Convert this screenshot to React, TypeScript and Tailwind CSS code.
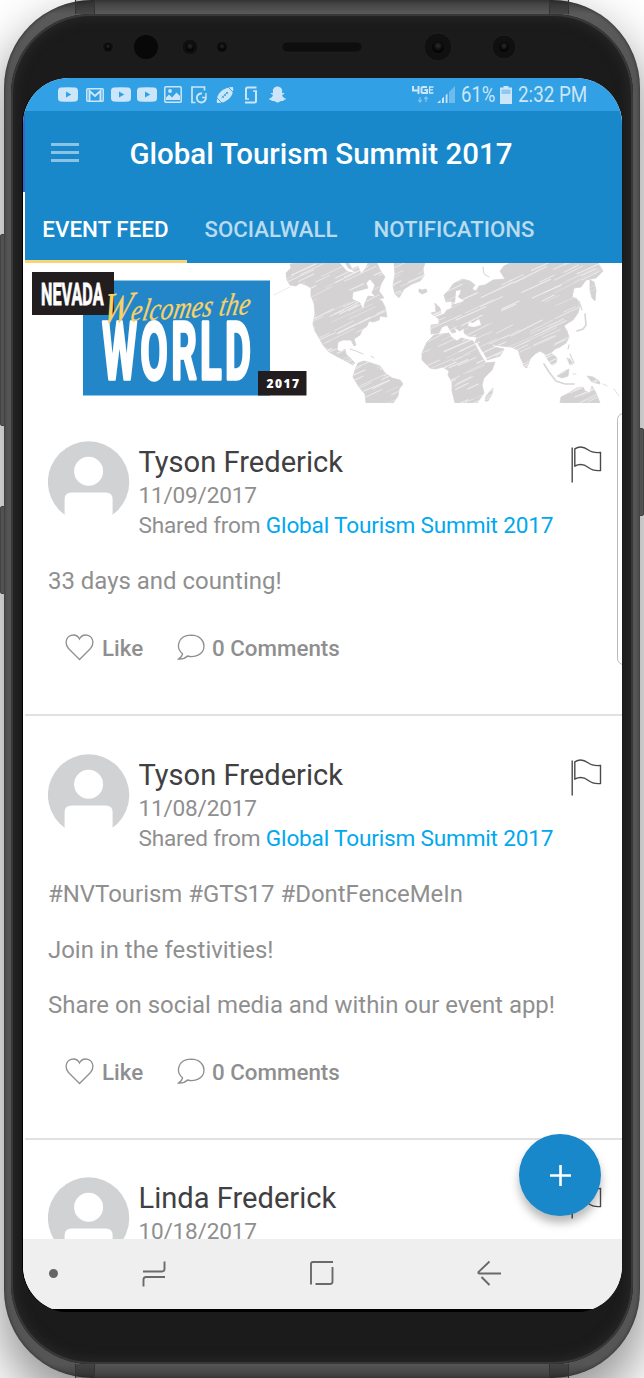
import React from "react";
import { FaSnapchatGhost } from "react-icons/fa";

const LAND = [
  "M287 280 L286 273 L291 268 L290 264 L298 263 L349 263 L352 269 L358 266 L361 274 L366 268 L368 263 L377 263 L380 270 L385 277 L381 284 L379 291 L384 298 L378 299 L372 293 L375 285 L370 279 L366 283 L368 288 L361 290 L353 292 L352 299 L360 303 L363 310 L365 303 L368 296 L375 297 L382 301 L385 307 L387 317 L380 316 L379 320 L373 322 L369 321 L367 326 L362 330 L360 335 L354 339 L356 345 L354 346 L351 340 L343 340 L338 342 L337 350 L341 352 L345 349 L346 354 L350 358 L355 363 L353 365 L346 361 L338 357 L329 352 L323 345 L318 336 L315 331 L313 324 L315 313 L314 303 L311 296 L311 288 L306 285 L300 283 L296 286 L290 285 Z",
  "M358 363 L364 361 L371 363 L380 366 L385 373 L392 378 L400 380 L403 384 L399 389 L398 396 L393 403 L366 403 L365 394 L359 387 L353 377 L355 370 Z",
  "M394 263 L425 263 L423 269 L424 276 L420 281 L412 284 L404 289 L399 298 L395 294 L393 286 L395 274 Z",
  "M419 289 L422 290 L426 289 L427 292 L422 294 L419 292 Z",
  "M431 325 L439 324 L439 319 L436 317 L444 314 L447 310 L452 308 L452 301 L446 302 L444 295 L449 290 L453 284 L462 279 L470 281 L475 285 L472 289 L476 291 L479 286 L485 285 L493 280 L505 279 L500 271 L504 266 L510 263 L598 263 L603 271 L596 278 L586 280 L581 287 L574 288 L572 297 L577 299 L580 306 L578 313 L573 320 L568 323 L564 326 L567 331 L569 337 L566 343 L560 347 L555 349 L551 353 L557 358 L556 363 L552 365 L548 360 L545 354 L540 351 L535 354 L530 359 L528 365 L525 367 L521 359 L518 350 L511 347 L501 346 L494 345 L490 341 L494 347 L504 349 L500 356 L487 360 L480 351 L475 343 L477 337 L468 336 L464 333 L464 328 L460 331 L455 328 L451 322 L456 332 L452 333 L447 325 L442 327 L439 333 L431 334 Z",
  "M434 335 L442 334 L449 333 L451 337 L457 341 L461 338 L473 341 L480 354 L486 363 L495 362 L492 370 L484 378 L482 385 L484 393 L477 403 L455 403 L452 391 L452 382 L448 375 L449 371 L443 367 L435 369 L430 368 L422 360 L422 353 L427 342 Z",
  "M486 396 L493 388 L492 394 L488 401 L485 401 Z",
  "M560 403 L561 397 L569 393 L577 388 L583 387 L585 391 L590 393 L592 386 L596 393 L600 403 Z",
  "M590 280 L594 282 L596 290 L595 301 L592 298 L590 290 Z",
  "M431 313 L436 312 L435 303 L440 308 L441 313 L434 316 Z",
  "M557 376 L563 372 L569 369 L568 376 L562 378 Z",
  "M587 376 L593 377 L599 381 L600 384 L592 382 Z",
  "M567 358 L570 359 L573 364 L570 365 Z",
  "M523 365 L527 364 L527 368 L525 367 Z",
];

function hatchLines() {
  let seed = 17;
  const rnd = () => {
    seed = (seed * 16807) % 2147483647;
    return seed / 2147483647;
  };
  return Array.from({ length: 330 }, () => {
    const x = 275 + rnd() * 325;
    const y = 262 + rnd() * 148;
    const len = 8 + rnd() * 26;
    return { x, y, x2: x + len, y2: y - len * (0.42 + rnd() * 0.1), w: 0.4 + rnd() * 0.8 };
  });
}

function WorldMap() {
  return (
    <g>
      <clipPath id="land">
        {LAND.map((d) => (
          <path key={d} d={d} />
        ))}
      </clipPath>
      <g fill="#d5d3d4" stroke="#d5d3d4" strokeWidth=".8" strokeLinejoin="round">
        {LAND.map((d) => (
          <path key={d} d={d} />
        ))}
      </g>
      <g clipPath="url(#land)" stroke="#fff" strokeLinecap="round" opacity=".6">
        {hatchLines().map((l, i) => (
          <line key={i} x1={l.x} y1={l.y} x2={l.x2} y2={l.y2} strokeWidth={l.w} />
        ))}
      </g>
      <g fill="none" stroke="#d7d5d6" strokeWidth="1.6" strokeLinecap="round">
        <path d="M544 364 L549 372 L556 381 L565 384 L574 384" />
        <path d="M585 314 L586 325 L583 329 L577 331" />
        <path d="M579 301 L582 310 M569 345 L568 349 M570 354 L574 363" strokeWidth="1.1" />
        <path d="M483 267 L484 274 L489 277 M350 349 L356 351 L363 354 M371 356 L374 358" strokeWidth="1" />
        <path d="M290 287 L282 291 L274 295" strokeWidth=".5" />
        <path d="M573 374 L576 374 M603 384 L607 386 M614 389 L619 396" strokeWidth=".8" />
      </g>
      <g fill="#fff">
        <path d="M469 322 L473 323 L479 319 L481 325 L474 327 L468 326 Z" />
        <path d="M456 291 L461 290 L458 297 L464 301 L455 304 Z" />
        <path d="M475 343 L477 343 L487 359 L485 360 Z" />
        <path d="M340 263 L347 271 L356 273 L348 268 L345 263 Z" />
      </g>
    </g>
  );
}

function Banner() {
  return (
    <svg className="block h-[140px] w-[597px] shrink-0" viewBox="25 263 597 140">
      <WorldMap />
      <rect x="83" y="280.500" width="187" height="115" fill="#2386c8" />
      <rect x="32" y="272" width="82" height="43" fill="#221e1f" />
      <rect x="258" y="371" width="48.500" height="24.500" fill="#221e1f" />
      <g fill="#fff" fontFamily="Roboto, sans-serif" fontWeight="700">
        <text transform="translate(41 304.500) scale(.53 1)" fontSize="30.500" textLength="118" lengthAdjust="spacing" stroke="#fff" strokeWidth=".8">
          NEVADA
        </text>
        <text transform="translate(102 379) scale(.5 1)" fontSize="80" textLength="298" lengthAdjust="spacing" stroke="#fff" strokeWidth="3.400" strokeLinejoin="round">
          WORLD
        </text>
        <text x="266.500" y="387.500" fontFamily="Open Sans, sans-serif" fontWeight="800" fontSize="12" textLength="32.500">
          2017
        </text>
      </g>
      <text
        transform="translate(101 323) rotate(-3.500) skewX(-14) scale(.8 1)"
        fontFamily="Liberation Serif, serif"
        fontStyle="italic"
        fontSize="31"
        fill="#f6d267"
        stroke="#f6d267"
        strokeWidth=".3"
        textLength="185"
        lengthAdjust="spacing"
      >
        <tspan fontSize="43">W</tspan>elcomes the
      </text>
    </svg>
  );
}

function Sensors() {
  const lens = [
    { x: 108, r: 5.5, i: 3 },
    { x: 190, r: 8, i: 4.5 },
    { x: 222, r: 6, i: 3.5 },
    { x: 438, r: 14, i: 6 },
    { x: 504, r: 12, i: 5 },
  ];
  return (
    <svg className="block h-[64px] w-[600px] shrink-0" viewBox="22 14 600 64">
      <defs>
        <radialGradient id="lens" cx=".5" cy=".4" r=".6">
          <stop offset="0" stopColor="#2c2c2c" />
          <stop offset=".6" stopColor="#0b0b0b" />
          <stop offset="1" stopColor="#000" />
        </radialGradient>
      </defs>
      {lens.map((l) => (
        <g key={l.x}>
          <circle cx={l.x} cy="47" r={l.r} fill="#101010" stroke="#232323" strokeWidth=".8" />
          <circle cx={l.x} cy="47" r={l.i} fill="url(#lens)" />
        </g>
      ))}
      <circle cx="146" cy="47" r="12" fill="#080808" />
      <rect x="282" y="42" width="80" height="10" rx="5" fill="#0e0e0e" stroke="#222" strokeWidth=".6" />
    </svg>
  );
}

function PlayIcon() {
  return (
    <svg className="h-[15px] w-[20px]" viewBox="0 0 20 15">
      <path fillRule="evenodd" fill="currentColor" d="M3 .5 Q10 -.2 17 .5 Q20 .7 20 4 V11 Q20 14.300 17 14.500 Q10 15.200 3 14.500 Q0 14.300 0 11 V4 Q0 .7 3 .5Z M8 4.500 V10.500 L13.300 7.500Z" />
    </svg>
  );
}

function StatusBar() {
  return (
    <div className="flex h-[33px] shrink-0 items-center bg-[#32a0e4] pl-[35px] pr-[34px] text-[#cbe6f8]">
      <div className="flex items-center">
        <PlayIcon />
        <svg className="ml-[8px] h-[14px] w-[18px]" viewBox="0 0 18 14" fill="none" stroke="currentColor">
          <rect x=".8" y=".8" width="16.400" height="12.400" rx="1" strokeWidth="1.500" />
          <path d="M3.500 13 V3 L9 8 L14.500 3 V13" strokeWidth="2" />
        </svg>
        <span className="ml-[7px] flex"><PlayIcon /></span>
        <span className="ml-[6px] flex"><PlayIcon /></span>
        <svg className="ml-[7px] h-[17px] w-[18px]" viewBox="0 0 18 17">
          <rect x=".8" y=".8" width="16.400" height="15.400" rx="1" fill="none" stroke="currentColor" strokeWidth="1.500" />
          <circle cx="6" cy="5" r="1.900" fill="currentColor" />
          <path d="M2 14 V11.500 L5 8.500 L8 11.500 L12.500 6.500 L16 10 V14Z" fill="currentColor" />
        </svg>
        <svg className="ml-[9px] h-[18px] w-[17px]" viewBox="0 0 17 18" fill="none" stroke="currentColor">
          <path d="M4.500 16.500 H1 V1 H13.500 V4.500" strokeWidth="1.700" />
          <path d="M11 7.500 A4.500 4.500 0 1 0 14.800 12" strokeWidth="1.900" />
          <path d="M11 11.500 H15 V7" strokeWidth="1.400" />
        </svg>
        <svg className="ml-[8px] h-[18px] w-[18px]" viewBox="0 0 18 18">
          <path d="M1 17 C-.5 9 6 1 17 1 C18.500 9 11.500 17.500 1 17Z" fill="currentColor" />
          <path d="M5.500 12 L12 6 M6 9.800 L8 12 M8 8 L10 10.200 M10 6 L12 8.200 M.5 11.500 L6.500 17.500 M11.500 .5 L17.500 6.500" stroke="#32a0e4" strokeWidth=".9" fill="none" />
        </svg>
        <svg className="ml-[10px] h-[18px] w-[14px]" viewBox="0 0 14 18" fill="none" stroke="currentColor" strokeWidth="2">
          <path d="M2 13 V3 Q2 1.500 3.500 1.500 H12.500" />
          <path d="M1 16.500 H10.500 Q12 16.500 12 15 V5" />
          <path d="M1 13 H5 M9 5 H13" strokeWidth="1.400" />
        </svg>
        <FaSnapchatGhost className="ml-[11px] h-[17px] w-[17px]" />
      </div>
      <div className="ml-auto flex items-center font-[Roboto,sans-serif]">
        <svg className="h-[20px] w-[23px]" viewBox="0 0 23 20" fill="none" stroke="currentColor">
          <path d="M1 1 V5.500 H7.500 M6.500 1 V9 M15 2 H11 Q9.500 2 9.500 3.500 V6.500 Q9.500 8 11 8 H15 V5 H12.500" strokeWidth="2" />
          <path d="M17 2 H21.500 M17 4.800 H21 M17 8 H21.500 M17.500 2 V8" strokeWidth="1.300" />
          <path d="M8 17 V12 M6.300 15 L8 17 L9.700 15 M14 12 V17 M12.300 14 L14 12 L15.700 14" strokeWidth="1.300" opacity=".5" />
        </svg>
        <svg className="ml-[2px] h-[17px] w-[18px]" viewBox="0 0 18 17" fill="currentColor">
          <path d="M0 17 L3.500 14 V17Z M5 12.500 L7 10.800 V17 H5Z M8.700 9.300 L10.500 7.600 V17 H8.700Z" />
          <path d="M12 6 L18 0 V17 H12Z" opacity=".4" />
        </svg>
        <span className="ml-[6px] w-[35px] whitespace-nowrap pt-px text-[21.500px] leading-[24px]">
          <span className="inline-block origin-left scale-x-[.86]">61%</span>
        </span>
        <svg className="ml-[4px] h-[18px] w-[12px]" viewBox="0 0 12 18" fill="currentColor">
          <path d="M3.500 0 H8.500 V1.500 H12 V18 H0 V1.500 H3.500Z" />
          <path d="M1.500 3.500 H10.500 V8 H1.500Z" fill="#8fc9ef" />
        </svg>
        <span className="ml-[6px] w-[70px] whitespace-nowrap pt-px text-[21.500px] leading-[24px]">
          <span className="inline-block origin-left scale-x-[.875]">2:32 PM</span>
        </span>
      </div>
    </div>
  );
}

function Header() {
  return (
    <header className="flex h-[152px] shrink-0 flex-col bg-[#1888ca]">
      <div className="flex h-[84px] items-center pl-[26px] font-[Roboto,sans-serif]">
        <div className="flex w-[28px] flex-col gap-[5px] pb-[2px]">
          <span className="h-[3px] bg-[#8bc3e4]" />
          <span className="h-[3px] bg-[#8bc3e4]" />
          <span className="h-[3px] bg-[#8bc3e4]" />
        </div>
        <h1 className="ml-[50.500px] whitespace-nowrap pt-[2px] text-[29.450px] font-medium leading-[36px] text-white">Global Tourism Summit 2017</h1>
      </div>
      <nav className="flex h-[68px] whitespace-nowrap font-[Roboto,sans-serif] text-[22.200px] font-medium text-[#b9dbf0]">
        <div className="flex w-[162px] items-center justify-center border-b-[3px] border-[#f5d576] pr-px pt-[5px] text-[22.400px] text-white">EVENT FEED</div>
        <div className="flex w-[169px] items-center justify-center pr-px pt-[2px]">SOCIALWALL</div>
        <div className="flex w-[197px] items-center justify-center pr-px pt-[2px]">NOTIFICATIONS</div>
      </nav>
    </header>
  );
}

function Avatar() {
  return (
    <svg className="h-[82px] w-[82px] shrink-0" viewBox="0 0 82 82">
      <circle cx="40.600" cy="41" r="40.700" fill="#d0d2d4" />
      <circle cx="40.600" cy="30.300" r="14.500" fill="#fff" />
      <path d="M16.600 82 V58 Q16.600 51.500 23.600 51.500 H57.600 Q64.600 51.500 64.600 58 V82Z" fill="#fff" />
    </svg>
  );
}

function Flag() {
  return (
    <svg className="h-[37px] w-[31px] shrink-0" viewBox="0 0 31 37" fill="none" stroke="#4a4a4c" strokeWidth="1.400">
      <path d="M1.200 1.500 V36.500" />
      <path d="M3.800 2.800 C9 -.5 13 .8 17 3.800 C21 6.800 24 7 29.500 6.500 V24.500 C24 25.200 21 24.200 17 21.200 C13 18.200 9 17.500 3.800 20Z" />
    </svg>
  );
}

function PostHead({ name, date, shared }: { name: string; date: string; shared?: string }) {
  return (
    <div className="flex">
      <Avatar />
      <div className="ml-[8.500px] whitespace-nowrap pt-[2px]">
        <div className="text-[29.100px] leading-[38px] text-[#404042]">{name}</div>
        <div className="text-[22.600px] leading-[30px] tracking-[-0.2px]">{date}</div>
        {shared && (
          <div className="text-[22.600px] leading-[30px] tracking-[-0.18px]">
            Shared from <span className="text-[#00a8ef]">{shared}</span>
          </div>
        )}
      </div>
      <div className="ml-auto mr-[20px] pt-[5px]">
        <Flag />
      </div>
    </div>
  );
}

function Post({ name, date, lines }: { name: string; date: string; lines: string[] }) {
  return (
    <article className="shrink-0 border-b-2 border-[#e1e1e1] pb-[52px] pl-[23px] pt-[38px]">
      <PostHead name={name} date={date} shared="Global Tourism Summit 2017" />
      <div className="mt-[25px] flex flex-col gap-[25.500px] whitespace-nowrap text-[23.950px] leading-[30px]">
        {lines.map((line) => (
          <p key={line}>{line}</p>
        ))}
      </div>
      <div className="mt-[38px] flex h-[28px] items-center pl-[17px] text-[22.350px] font-medium">
        <svg className="mb-px h-[27px] w-[29px]" viewBox="0 0 29 27" fill="none" stroke="currentColor" strokeWidth="1.300">
          <path d="M14.500 25.500 L3.500 14.500 C-.5 10 .8 3 6 1.300 C10 .3 13 2 14.500 5 C16 2 19 .3 23 1.300 C28.200 3 29.500 10 25.500 14.500Z" />
        </svg>
        <span className="ml-[8px] w-[75px] pt-px">Like</span>
        <svg className="mb-px h-[27px] w-[28px]" viewBox="0 0 28 27" fill="none" stroke="currentColor" strokeWidth="1.300">
          <path d="M5.500 19.800 C-1.500 14 .5 1.500 14 1.200 C23 1.200 27 7 27 12 C27 20.500 18 24 10.500 22 C8 24.500 5 25.300 1.500 25 C4 23.500 5.200 22 5.500 19.800Z" />
        </svg>
        <span className="ml-[7px] whitespace-nowrap pt-px">0 Comments</span>
      </div>
    </article>
  );
}

function NavBar() {
  return (
    <div className="flex h-[70px] shrink-0 items-center bg-[#efefef] pb-[2px] pl-[26px]">
      <span className="h-[9px] w-[9px] rounded-full bg-[#666]" />
      <svg className="ml-[84px] h-[27px] w-[24px]" viewBox="0 0 24 27" fill="none" stroke="#6a6a6a" strokeWidth="1.900">
        <path d="M1 11.500 H20 Q22.500 11.500 22.500 9 V1.500" />
        <path d="M23 17 H4 Q1.500 17 1.500 19.500 V26.500" />
      </svg>
      <svg className="ml-[143px] h-[26px] w-[26px]" viewBox="0 0 26 26" fill="none" stroke="#6a6a6a" strokeWidth="1.900">
        <path d="M2 24.500 V4 Q2 2 4 2 H24" />
        <path d="M23.500 7 V21.500 Q23.500 24 21 24 H6.500" />
      </svg>
      <svg className="ml-[142px] h-[26px] w-[24px]" viewBox="0 0 24 26" fill="none" stroke="#6a6a6a" strokeWidth="1.900">
        <path d="M12.500 1.500 L1.500 12 Q1 13.500 2.500 13.500 H24" />
        <path d="M4.500 17 L12.500 25" />
      </svg>
    </div>
  );
}

export default function App() {
  return (
    <div className="relative flex h-[1378px] w-[644px] justify-center overflow-hidden bg-white">
      <div className="absolute left-0 top-[234px] h-[192px] w-[8px] rounded-[2px] border border-[#555] bg-[#6a6a6a]" />
      <div className="absolute left-0 top-[506px] h-[88px] w-[8px] rounded-[2px] border border-[#555] bg-[#6a6a6a]" />
      <div className="absolute right-0 top-[428px] h-[88px] w-[8px] rounded-[2px] border border-[#555] bg-[#6a6a6a]" />
      <div className="relative flex h-[1378px] w-[636px] rounded-[88px] bg-[linear-gradient(180deg,#3c3c3c_0px,#5a5a5a_14px,#555_80px,#555_1300px,#555_1364px,#3f3f3f_1378px)] px-[7px] py-[14px] shadow-[0_24px_50px_4px_rgba(0,0,0,0.42),inset_0_0_3px_1px_rgba(40,40,40,0.6)]">
        <div className="absolute left-[71px] top-0 h-[14px] w-[20px] border-x border-[#333] bg-black/20" />
        <div className="absolute right-[71px] top-0 h-[14px] w-[20px] border-x border-[#333] bg-black/20" />
        <div className="absolute bottom-0 left-[71px] h-[14px] w-[20px] border-x border-[#333] bg-black/20" />
        <div className="absolute bottom-0 right-[71px] h-[14px] w-[20px] border-x border-[#333] bg-black/20" />
        <div className="flex flex-1 flex-col items-center rounded-[80px] bg-[#1b1b1b] shadow-[inset_0_0_0_2px_#383838,inset_0_0_14px_2px_#2d2d2d]">
          <Sensors />
          <div className="relative ml-[1px] flex h-[1234px] w-[599px] flex-col overflow-hidden rounded-[46px] bg-black shadow-[-1px_0_0_#000]">
            <div className="flex h-[1231px] flex-col bg-white">
              <StatusBar />
              <div className="flex h-[1128px] shrink-0 bg-[linear-gradient(180deg,#3566cc_0px,#3566cc_81px,#fff_81px)] pl-[2px]">
                <div className="flex h-[1128px] w-[597px] flex-col overflow-hidden bg-white font-[Roboto,sans-serif] text-[#8f8f90]">
                  <Header />
                  <Banner />
                  <Post name="Tyson Frederick" date="11/09/2017" lines={["33 days and counting!"]} />
                  <Post
                    name="Tyson Frederick"
                    date="11/08/2017"
                    lines={["#NVTourism #GTS17 #DontFenceMeIn", "Join in the festivities!", "Share on social media and within our event app!"]}
                  />
                  <article className="shrink-0 pl-[23px] pt-[37px]">
                    <PostHead name="Linda Frederick" date="10/18/2017" />
                  </article>
                </div>
              </div>
              <NavBar />
            </div>
            <div className="absolute -right-[8px] top-[335px] h-[252px] w-[13px] rounded-[8px] border border-[#b9b9b9]" />
            <button className="absolute right-[21px] top-[1056px] flex h-[82px] w-[82px] items-center justify-center rounded-full bg-[#1888ca] shadow-[0_7px_10px_rgba(0,0,0,0.28)]">
              <svg className="h-[21px] w-[21px]" viewBox="0 0 21 21" stroke="#fff" strokeWidth="2.600">
                <path d="M0 10.500 H21 M10.500 0 V21" />
              </svg>
            </button>
          </div>
        </div>
      </div>
    </div>
  );
}
